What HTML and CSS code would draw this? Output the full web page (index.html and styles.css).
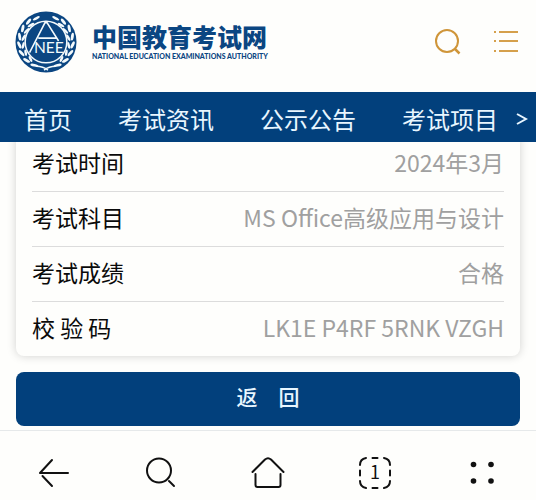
FILE: index.html
```html
<!DOCTYPE html>
<html lang="zh-CN">
<head>
  <meta charset="UTF-8" />
  <meta name="viewport" content="width=device-width, initial-scale=1.0"/>
  <title>中国教育考试网</title>
  <link rel="stylesheet" href="styles.css">
</head>
<body>
  <header class="header">
    <a class="brand" href="#">
      <svg class="emblem" viewBox="0 0 64 64" aria-hidden="true">
        <defs>
          <g id="leaves" fill="#f4fafc">
            <ellipse cx="22" cy="7.500" rx="4" ry="1.300" transform="rotate(-28 22 7.500)"/>
            <ellipse cx="14" cy="11" rx="1.500" ry="3.800" transform="rotate(38 14 11)"/>
            <ellipse cx="16.500" cy="14.500" rx="3.800" ry="1.300" transform="rotate(-30 16.500 14.500)"/>
            <ellipse cx="8" cy="18" rx="1.500" ry="4" transform="rotate(12 8 18)"/>
            <ellipse cx="12" cy="20.500" rx="1.300" ry="3.800" transform="rotate(45 12 20.500)"/>
            <ellipse cx="4.800" cy="26.500" rx="1.500" ry="4" transform="rotate(-8 4.800 26.500)"/>
            <ellipse cx="9" cy="27.500" rx="1.300" ry="3.800" transform="rotate(28 9 27.500)"/>
            <ellipse cx="4.500" cy="35" rx="1.500" ry="4" transform="rotate(-25 4.500 35)"/>
            <ellipse cx="8.500" cy="35.500" rx="1.300" ry="3.600" transform="rotate(12 8.500 35.500)"/>
            <ellipse cx="6.800" cy="43.500" rx="1.500" ry="4" transform="rotate(-42 6.800 43.500)"/>
            <ellipse cx="11" cy="43" rx="1.300" ry="3.400" transform="rotate(-8 11 43)"/>
            <ellipse cx="12" cy="51" rx="1.500" ry="4" transform="rotate(-60 12 51)"/>
            <ellipse cx="16" cy="49.500" rx="1.300" ry="3.400" transform="rotate(-25 16 49.500)"/>
            <ellipse cx="20" cy="56" rx="4.200" ry="1.400" transform="rotate(12 20 56)"/>
          </g>
        </defs>
        <circle cx="32" cy="32" r="31.500" fill="#0b4682"/>
        <use href="#leaves"/>
        <use href="#leaves" transform="matrix(-1 0 0 1 64 0)"/>
        <g fill="none" stroke="#f4fafc" stroke-width="1.600">
          <circle cx="32" cy="32" r="21.500"/>
          <path d="M15 43 31 12h2L45 31M24 28h19M22 57q7 0 12 4M42 57q-7 0-12 4"/>
        </g>
        <text class="emblem-text" x="35" y="43" text-anchor="middle">NEE</text>
      </svg>
      <span class="brand-text">
        <span class="brand-name">中国教育考试网</span>
        <span class="brand-sub">NATIONAL EDUCATION EXAMINATIONS AUTHORITY</span>
      </span>
    </a>
    <div class="header-actions">
      <button class="icon-btn" type="button" aria-label="搜索">
        <svg width="28" height="28" viewBox="0 0 28 28" fill="none" stroke="#cf9539" stroke-width="2">
          <circle cx="13" cy="13" r="11"/>
          <path d="m20.500 20.500 5 5" stroke-width="2.500"/>
        </svg>
      </button>
      <button class="icon-btn" type="button" aria-label="菜单">
        <svg width="28" height="28" viewBox="0 0 28 28" fill="none" stroke="#d5a04c" stroke-width="2">
          <path d="M2 4h2M7 4h19M2 13h2M7 13h19M2 23h2M7 23h19"/>
        </svg>
      </button>
    </div>
  </header>

  <nav class="nav">
    <a href="#">首页</a>
    <a href="#">考试资讯</a>
    <a href="#">公示公告</a>
    <a href="#">考试项目</a>
    <button class="nav-more" type="button" aria-label="更多">
      <svg width="12" height="14" viewBox="0 0 12 14" fill="none" stroke="#e8f6ff" stroke-width="2">
        <path d="m1 2 9 5-9 5"/>
      </svg>
    </button>
  </nav>

  <main class="content">
    <dl class="card">
      <div class="row"><dt>考试时间</dt><dd>2024年3月</dd></div>
      <div class="row"><dt>考试科目</dt><dd>MS Office高级应用与设计</dd></div>
      <div class="row"><dt>考试成绩</dt><dd>合格</dd></div>
      <div class="row"><dt>校 验 码</dt><dd>LK1E P4RF 5RNK VZGH</dd></div>
    </dl>
    <button class="back-btn" type="button">返&#12288;回</button>
  </main>

  <footer class="toolbar">
    <button class="icon-btn" type="button" aria-label="后退">
      <svg width="34" height="34" viewBox="0 0 34 34">
        <path d="M15 4 3 17H31M5.500 20l9.500 10"/>
      </svg>
    </button>
    <button class="icon-btn" type="button" aria-label="查找">
      <svg width="34" height="34" viewBox="0 0 34 34">
        <circle cx="15" cy="14.500" r="12"/>
        <path d="m25 25 5 5"/>
      </svg>
    </button>
    <button class="icon-btn" type="button" aria-label="主页">
      <svg width="34" height="34" viewBox="0 0 34 34">
        <path d="M1.500 16 14 3.500Q17 1 20 3.500L32.500 16M4.500 18v11q0 2 2 2h21q2 0 2-2V18"/>
      </svg>
    </button>
    <button class="icon-btn" type="button" aria-label="标签页">
      <svg width="34" height="34" viewBox="0 0 34 34">
        <path d="M2 9q0-6 6-7M14.500 2h5M26 2q6 1 6 7M32 14.500v5M32 25q0 6-6 7M19.500 32h-5M8 32q-6-1-6-7M2 19.500v-5"/>
        <text class="tab-count" x="17" y="23" text-anchor="middle">1</text>
      </svg>
    </button>
    <button class="icon-btn" type="button" aria-label="更多功能">
      <svg class="dots" width="34" height="34" viewBox="0 0 34 34">
        <circle cx="8.500" cy="8.500" r="2.800"/>
        <circle cx="26" cy="8.500" r="2.800"/>
        <circle cx="8.500" cy="25" r="2.800"/>
        <circle cx="26" cy="25" r="2.800"/>
      </svg>
    </button>
  </footer>
</body>
</html>
```
FILE: styles.css
```css
* {
  box-sizing: border-box;
}
body {
  margin: 0;
  background: #fefefc;
  color: #111;
  font-family: "Noto Sans CJK SC", sans-serif;
}
a {
  color: inherit;
  text-decoration: none;
}
button {
  border: none;
  cursor: pointer;
  font-family: inherit;
}
svg {
  display: block;
}
.header {
  display: flex;
  align-items: center;
  justify-content: space-between;
  height: 92px;
  padding: 0 16px 8px 14px;
}
.brand {
  display: flex;
  align-items: center;
  gap: 14px;
  color: #0b4682;
}
.emblem {
  width: 64px;
  height: 62px;
}
.emblem-text {
  font: 16px Lato, sans-serif;
  fill: #f4fafc;
}
.brand-text {
  display: flex;
  flex-direction: column;
  padding-bottom: 4px;
  white-space: nowrap;
}
.brand-name {
  font-size: 25px;
  font-weight: 900;
  line-height: 32px;
}
.brand-sub {
  font-family: Lato, sans-serif;
  font-size: 7px;
  font-weight: 900;
  line-height: 8px;
}
.header-actions {
  display: flex;
  gap: 30px;
}
.icon-btn {
  padding: 0;
  background: none;
}
.nav {
  position: relative;
  display: flex;
  align-items: center;
  gap: 46px;
  height: 50px;
  padding: 0 8px 0 24px;
  background: #02407c;
  color: #e8f6ff;
  font-size: 24px;
  line-height: 32px;
  white-space: nowrap;
  z-index: 1;
}
.nav a {
  padding-top: 4px;
}
.nav-more {
  margin-left: auto;
  padding: 4px 0 0;
  background: none;
}
.nav a:nth-last-child(2) {
  margin-right: -36px;
}
.content {
  padding: 0 16px 4px;
}
.card {
  margin: -5px 0 16px;
  padding: 0 16px;
  border-radius: 0 0 8px 8px;
  box-shadow: 0 0 10px rgba(0,0,0,0.18);
}
.row {
  display: flex;
  justify-content: space-between;
  height: 55px;
  padding-top: 9px;
  border-bottom: 1px solid #dcdcdc;
  font-size: 23px;
  line-height: 32px;
}
.row:last-child {
  height: 54px;
  border-bottom: none;
}
dt {
  color: #0a0a0a;
}
dd {
  margin: 0;
  color: #a0a0a0;
}
.back-btn {
  display: block;
  width: 100%;
  height: 54px;
  padding: 0 0 6px;
  border-radius: 8px;
  background: #02407c;
  color: #e8f6ff;
  font-size: 21px;
  font-weight: 500;
}
.toolbar {
  display: grid;
  grid-template-columns: repeat(5, 1fr);
  place-items: center;
  height: 70px;
  padding-top: 14px;
  border-top: 1px solid #e6e9ea;
}
.toolbar svg {
  fill: none;
  stroke: #111;
  stroke-width: 2;
  stroke-linecap: round;
  stroke-linejoin: round;
}
.toolbar .dots {
  fill: #111;
  stroke: none;
}
.toolbar .tab-count {
  font: 18px "Noto Sans CJK SC", sans-serif;
  fill: #111;
  stroke: none;
}
```
